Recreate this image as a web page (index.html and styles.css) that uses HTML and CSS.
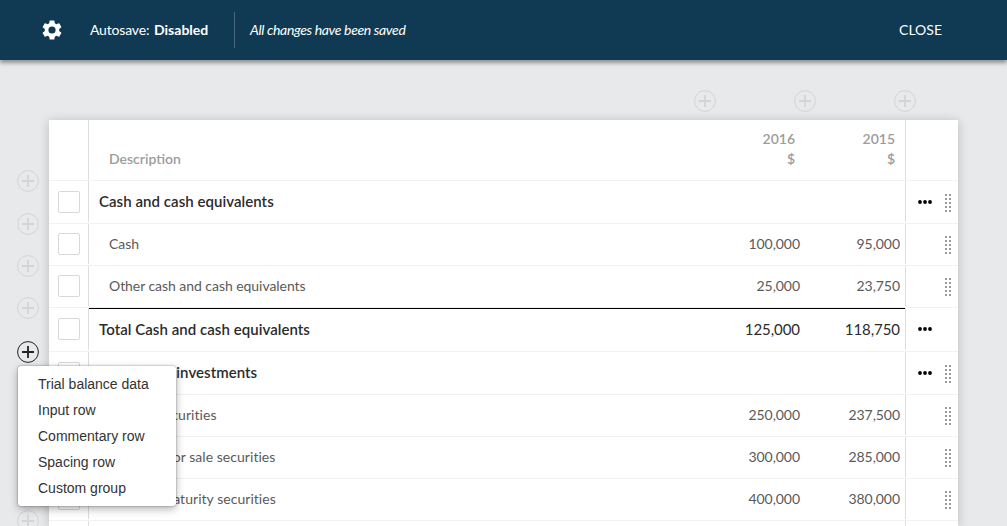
FILE: index.html
```html
<!DOCTYPE html>
<html lang="en">
<head>
<meta charset="utf-8">
<title>Statement editor</title>
<link rel="stylesheet" href="styles.css">
</head>
<body>
<svg width="0" height="0" class="defs">
  <symbol id="plus" viewBox="0 0 22 22"><circle cx="11" cy="11" r="10.4" fill="none" stroke="currentColor"/><path d="M5 11H17M11 5V17" fill="none" stroke="currentColor" stroke-width="1.8"/></symbol>
  <symbol id="dots" viewBox="0 0 14 4"><circle cx="2" cy="2" r="1.9"/><circle cx="7" cy="2" r="1.9"/><circle cx="12" cy="2" r="1.9"/></symbol>
  <symbol id="grip" viewBox="0 0 6 18"><path d="M1 0V18M5 0V18" fill="none" stroke="#999" stroke-width="2" stroke-dasharray="2 2"/></symbol>
</svg>
<header class="bar">
  <svg class="gear" viewBox="2 2 20 20"><path fill="#fff" d="M19.14 12.94c.04-.3.06-.61.06-.94s-.02-.64-.07-.94l2.03-1.58a.49.49 0 0 0 .12-.61l-1.92-3.32a.488.488 0 0 0-.59-.22l-2.39.96c-.5-.38-1.03-.7-1.62-.94l-.36-2.54a.484.484 0 0 0-.48-.41h-3.84c-.24 0-.43.17-.47.41l-.36 2.54c-.59.24-1.13.57-1.62.94l-2.39-.96c-.22-.08-.47 0-.59.22L2.74 8.87c-.12.21-.08.47.12.61l2.03 1.58c-.05.3-.09.63-.09.94s.02.64.07.94l-2.03 1.58a.49.49 0 0 0-.12.61l1.92 3.32c.12.22.37.29.59.22l2.39-.96c.5.38 1.03.7 1.62.94l.36 2.54c.05.24.24.41.48.41h3.84c.24 0 .44-.17.47-.41l.36-2.54c.59-.24 1.13-.56 1.62-.94l2.39.96c.22.08.47 0 .59-.22l1.92-3.32c.12-.22.07-.47-.12-.61zM12 15.6A3.6 3.6 0 1 1 12 8.4a3.6 3.6 0 0 1 0 7.2z"/></svg>
  <span class="autosave">Autosave: <b>Disabled</b></span>
  <span class="status">All changes have been saved</span>
  <span class="close">CLOSE</span>
</header>
<main class="stage">
  <div class="add-columns">
    <svg class="plus"><use href="#plus"/></svg><svg class="plus"><use href="#plus"/></svg><svg class="plus"><use href="#plus"/></svg>
  </div>
  <div class="sheet">
    <div class="gutter">
      <div class="slot group"><svg class="plus"><use href="#plus"/></svg></div>
      <div class="slot"><svg class="plus"><use href="#plus"/></svg></div>
      <div class="slot"><svg class="plus"><use href="#plus"/></svg></div>
      <div class="slot total"><svg class="plus"><use href="#plus"/></svg></div>
      <div class="slot active">
        <svg class="plus"><use href="#plus"/></svg>
        <ul class="menu">
          <li>Trial balance data</li>
          <li>Input row</li>
          <li>Commentary row</li>
          <li>Spacing row</li>
          <li>Custom group</li>
        </ul>
      </div>
      <div class="slot last"><svg class="plus"><use href="#plus"/></svg></div>
    </div>
    <div class="card">
      <div class="row head"><div class="check"></div><div class="data"><span class="name">Description</span><span class="num">2016<br>$</span><span class="num">2015<br>$</span></div><div class="tools"></div></div>
      <div class="row group"><div class="check"><i class="box"></i></div><div class="data"><span class="name">Cash and cash equivalents</span></div><div class="tools"><svg class="dots"><use href="#dots"/></svg><svg class="grip"><use href="#grip"/></svg></div></div>
      <div class="row"><div class="check"><i class="box"></i></div><div class="data"><span class="name">Cash</span><span class="num">100,000</span><span class="num">95,000</span></div><div class="tools"><svg class="grip"><use href="#grip"/></svg></div></div>
      <div class="row"><div class="check"><i class="box"></i></div><div class="data"><span class="name">Other cash and cash equivalents</span><span class="num">25,000</span><span class="num">23,750</span></div><div class="tools"><svg class="grip"><use href="#grip"/></svg></div></div>
      <div class="row total"><div class="check"><i class="box"></i></div><div class="data"><span class="name">Total Cash and cash equivalents</span><span class="num">125,000</span><span class="num">118,750</span></div><div class="tools"><svg class="dots"><use href="#dots"/></svg></div></div>
      <div class="row group"><div class="check"><i class="box"></i></div><div class="data"><span class="name">Short-term investments</span></div><div class="tools"><svg class="dots"><use href="#dots"/></svg><svg class="grip"><use href="#grip"/></svg></div></div>
      <div class="row security"><div class="check"><i class="box"></i></div><div class="data"><span class="name">Trading securities</span><span class="num">250,000</span><span class="num">237,500</span></div><div class="tools"><svg class="grip"><use href="#grip"/></svg></div></div>
      <div class="row security"><div class="check"><i class="box"></i></div><div class="data"><span class="name">Available for sale securities</span><span class="num">300,000</span><span class="num">285,000</span></div><div class="tools"><svg class="grip"><use href="#grip"/></svg></div></div>
      <div class="row security"><div class="check"><i class="box"></i></div><div class="data"><span class="name">Held-to-maturity securities</span><span class="num">400,000</span><span class="num">380,000</span></div><div class="tools"><svg class="grip"><use href="#grip"/></svg></div></div>
      <div class="row tail"><div class="check"></div><div class="data"></div><div class="tools"></div></div>
    </div>
  </div>
</main>
</body>
</html>
```
FILE: styles.css
```css
* { box-sizing: border-box; }
body { margin: 0; height: 526px; overflow: hidden; background: #e8e9eb; font: 14px/20px Lato, sans-serif; color: #5a5a5a; }
svg { display: block; flex: none; }
.defs { position: absolute; }
.bar { position: relative; z-index: 2; display: flex; align-items: center; height: 60px; padding: 0 65px 0 42px; background: #103a53; color: #fff; box-shadow: 0 3px 4px rgba(0, 0, 0, .38); }
.gear { width: 20px; height: 20px; margin-right: 28px; }
.autosave { width: 144px; letter-spacing: -.18px; word-spacing: 1.3px; }
.autosave b { font-weight: 700; letter-spacing: .03px; }
.status { display: flex; align-items: center; height: 36px; padding-left: 15px; border-left: 1px solid #48697d; font-style: italic; letter-spacing: -.35px; }
.close { margin-left: auto; }
.plus { width: 22px; height: 22px; color: #d3d4d6; }
.add-columns { display: flex; gap: 78px; height: 60px; padding: 30px 0 0 694px; }
.sheet { display: flex; height: 406px; }
.gutter { display: flex; flex-direction: column; width: 49px; padding: 50px 0 0 17px; flex: none; }
.slot { position: relative; height: 42px; flex: none; }
.slot.group { height: 43px; }
.slot.total { height: 44px; }
.slot.active { height: 169px; }
.slot.last { height: 16px; overflow: hidden; }
.active .plus { color: #222; }
.card { width: 909px; height: 406px; flex: none; background: #fff; box-shadow: 0 1px 10px rgba(0, 0, 0, .2); }
.row { display: flex; height: 42px; padding-bottom: 1px; border-bottom: 1px solid #f1f2f2; letter-spacing: -.05px; }
.row.head { height: 61px; padding-bottom: 0; letter-spacing: 0; }
.row.group { height: 43px; }
.row.total { height: 44px; }
.row.tail { height: 5px; padding: 0; border: 0; }
.security .name { letter-spacing: .04px; }
.check { display: flex; align-items: flex-start; width: 40px; padding: 9px 0 0 9px; border-right: 1px solid #ddd; }
.group .check, .total .check { padding-top: 10px; }
.tail .check { padding: 0; }
.box { width: 22px; height: 22px; border: 1px solid #d8d8d8; border-radius: 2px; }
.data { display: flex; align-items: center; flex: 1; padding: 0 5px 0 20px; }
.name { flex: 1; }
.num { width: 100px; text-align: right; }
.head .data { align-items: flex-end; padding-bottom: 11px; padding-right: 10px; font-weight: 600; color: #9c9c9c; }
.group .data, .total .data { padding-left: 10px; padding-bottom: 2px; font-size: 15px; color: #2b2b2b; }
.group .name, .total .name { font-weight: 600; letter-spacing: .05px; }
.total .data { border-top: 1px solid #000; }
.tools { display: flex; align-items: center; justify-content: flex-end; gap: 13px; width: 53px; padding-right: 7px; border-left: 1px solid #ddd; }
.dots { width: 14px; height: 4px; fill: #000; }
.total .dots { margin-right: 19px; }
.grip { width: 6px; height: 18px; margin-top: 1px; }
.group .grip { margin-top: 3px; }
.menu { position: absolute; z-index: 3; left: 1px; top: 25px; width: 158px; height: 140px; margin: 0; padding: 5px 0 0 20px; list-style: none; background: #fff; border-radius: 3px; box-shadow: 0 0 2px rgba(0, 0, 0, .45), 0 3px 9px rgba(0, 0, 0, .3); font: 14px/26px "Liberation Sans", Arial, sans-serif; color: #333; }
```
